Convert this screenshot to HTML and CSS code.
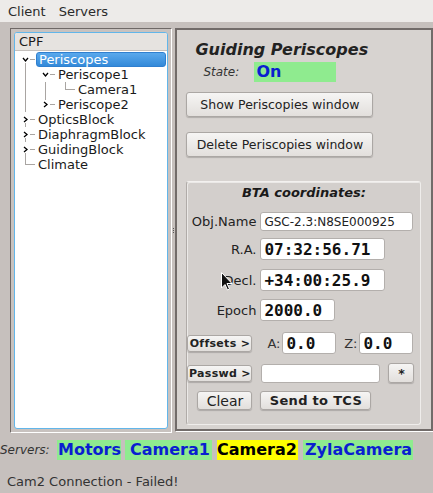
FILE: index.html
```html
<!DOCTYPE html>
<html lang="en">
<head>
    <meta charset="UTF-8">
    <title>CPF Client</title>
    <link rel="stylesheet" href="styles.css">
</head>
<body>

    <div class="menubar">
        <span>Client</span>
        <span>Servers</span>
    </div>

    <div class="main">
        <div class="left-frame">
            <div class="tree">
                <div class="tree-header">CPF</div>
                <div class="row">
                    <span class="cell tee open first"></span>
                    <span class="item selected">Periscopes</span>
                </div>
                <div class="row">
                    <span class="cell pipe"></span>
                    <span class="cell tee open"></span>
                    <span class="item">Periscope1</span>
                </div>
                <div class="row">
                    <span class="cell pipe"></span>
                    <span class="cell pipe"></span>
                    <span class="cell elbow"></span>
                    <span class="item">Camera1</span>
                </div>
                <div class="row">
                    <span class="cell pipe"></span>
                    <span class="cell elbow closed"></span>
                    <span class="item">Periscope2</span>
                </div>
                <div class="row">
                    <span class="cell tee closed"></span>
                    <span class="item">OpticsBlock</span>
                </div>
                <div class="row">
                    <span class="cell tee closed"></span>
                    <span class="item">DiaphragmBlock</span>
                </div>
                <div class="row">
                    <span class="cell tee closed"></span>
                    <span class="item">GuidingBlock</span>
                </div>
                <div class="row">
                    <span class="cell elbow"></span>
                    <span class="item">Climate</span>
                </div>
            </div>
        </div>

        <div class="splitter"><i></i><i></i><i></i></div>

        <div class="right-frame">
            <h2>Guiding Periscopes</h2>
            <div class="state">
                <span class="state-label">State:</span>
                <span class="state-value">On</span>
            </div>
            <button class="btn wide">Show Periscopies window</button>
            <button class="btn wide">Delete Periscopies window</button>

            <div class="group">
                <div class="group-title">BTA coordinates:</div>

                <div class="form-row obj">
                    <label>Obj.Name</label>
                    <input class="field name" value="GSC-2.3:N8SE000925">
                </div>
                <div class="form-row big ra">
                    <label>R.A.</label>
                    <input class="field mono coord" value="07:32:56.71">
                </div>
                <div class="form-row big decl">
                    <label>Decl.</label>
                    <input class="field mono coord" value="+34:00:25.9">
                    <svg class="cursor" width="12" height="19" viewBox="0 0 12 19">
                        <path d="M0.5 0.5 L0.5 16 L4 12.5 L6.5 18 L8.5 17 L6 11.5 L11 11.5 Z" fill="#111" stroke="#fff" stroke-width="1"/>
                    </svg>
                </div>
                <div class="form-row big">
                    <label>Epoch</label>
                    <input class="field mono epoch" value="2000.0">
                </div>
                <div class="form-row offsets">
                    <button class="btn small">Offsets &gt;</button>
                    <span class="axis a">A:</span>
                    <input class="field mono off" value="0.0">
                    <span class="axis z">Z:</span>
                    <input class="field mono off" value="0.0">
                </div>
                <div class="form-row passwd">
                    <button class="btn small">Passwd &gt;</button>
                    <input class="field pass" type="text" value="">
                    <button class="btn star">*</button>
                </div>
                <div class="form-row actions">
                    <button class="btn clear">Clear</button>
                    <button class="btn send">Send to TCS</button>
                </div>
            </div>
        </div>
    </div>

    <div class="servers">
        <span class="servers-label">Servers:</span>
        <span class="srv ok motors">Motors</span>
        <span class="srv ok cam1">Camera1</span>
        <span class="srv warn cam2">Camera2</span>
        <span class="srv ok zyla">ZylaCamera</span>
    </div>

    <div class="status">Cam2 Connection - Failed!</div>

</body>
</html>
```

FILE: styles.css
```css
body {
    margin: 0;
    width: 433px;
    height: 493px;
    overflow: hidden;
    background: #c6c0bd;
    font-family: "DejaVu Sans", sans-serif;
    font-size: 13px;
    color: #1a1a1a;
}
.menubar {
    height: 22px;
    display: flex;
    align-items: center;
    gap: 13px;
    padding-left: 8px;
    background: #edebe9;
    color: #2a2a2a;
}
.main {
    display: flex;
    height: 405px;
    margin-top: 6px;
    padding-left: 10px;
}
.left-frame {
    width: 156px;
    border: 1px solid #6e6866;
    border-right-color: #fff;
    border-bottom-color: #fff;
    padding: 3px;
    background: #c8c2bf;
}
.tree {
    height: 100%;
    box-sizing: border-box;
    background: #fff;
    border: 1px solid #62b6ea;
    border-radius: 3px;
    overflow: hidden;
}
.tree-header {
    height: 17px;
    line-height: 17px;
    padding-left: 4px;
    background: #e6e3e0;
    border-bottom: 1px solid #c4c0bd;
    margin-bottom: 1px;
}
.row {
    display: flex;
    height: 15px;
    line-height: 15px;
    padding-left: 1px;
}
.cell {
    position: relative;
    width: 20px;
    flex: none;
}
.cell.pipe::before,
.cell.tee::before,
.cell.elbow::before {
    content: "";
    position: absolute;
    left: 9px;
    top: 0;
    width: 1px;
    background: #a9a5a2;
}
.cell.pipe::before,
.cell.tee::before {
    height: 15px;
}
.cell.elbow::before {
    height: 8px;
}
.cell.tee::after,
.cell.elbow::after {
    content: "";
    position: absolute;
    left: 9px;
    top: 7px;
    width: 10px;
    height: 1px;
    background: #a9a5a2;
}
.cell.open,
.cell.closed {
    background: no-repeat 6px 4px / 7px 7px;
}
.cell.open {
    background-image: url("data:image/svg+xml,%3Csvg xmlns='http://www.w3.org/2000/svg' viewBox='0 0 7 7'%3E%3Crect width='7' height='7' fill='white'/%3E%3Cpath d='M1 2 L3.5 5 L6 2' fill='none' stroke='black' stroke-width='1.3'/%3E%3C/svg%3E");
}
.cell.closed {
    background-image: url("data:image/svg+xml,%3Csvg xmlns='http://www.w3.org/2000/svg' viewBox='0 0 7 7'%3E%3Crect width='7' height='7' fill='white'/%3E%3Cpath d='M2 1 L5 3.5 L2 6' fill='none' stroke='black' stroke-width='1.3'/%3E%3C/svg%3E");
}
.cell.open::before,
.cell.closed::before {
    top: 11px;
    height: 4px;
}
.cell.open:not(.first)::before {
    display: none;
}
.cell.elbow.closed::before {
    top: 0;
    height: 3px;
}
.cell.open::after,
.cell.closed::after {
    left: 14px;
    width: 5px;
}
.item {
    padding: 0 2px;
    white-space: nowrap;
}
.item.selected {
    flex: 1;
    margin-right: 1px;
    color: #fff;
    background: linear-gradient(#5aa9ec, #3389d9);
    border: 1px solid #2f7fcf;
    border-radius: 3px;
    line-height: 14px;
}
.splitter {
    width: 3px;
    display: flex;
    flex-direction: column;
    justify-content: center;
    gap: 1px;
    align-items: center;
}
.splitter i {
    width: 1px;
    height: 1px;
    background: #555;
}
.right-frame {
    width: 247px;
    border: 2px solid #716b69;
    box-shadow: 1px 1px 0 #fff;
    background: #d7d3d0;
    padding: 0 0 0 9px;
    margin-bottom: 2px;
}
h2 {
    margin: 10px 0 0 9px;
    font-size: 16px;
    font-style: italic;
    font-weight: bold;
    color: #222;
}
.state {
    display: flex;
    align-items: center;
    margin: 3px 0 0 17px;
    height: 20px;
}
.state-label {
    width: 51px;
    font-style: italic;
    font-size: 12px;
    color: #333;
}
.state-value {
    width: 80px;
    height: 20px;
    line-height: 20px;
    padding-left: 2px;
    background: #8feb8f;
    color: #0a1fd0;
    font-weight: bold;
    font-size: 16px;
}
.btn {
    font-family: "DejaVu Sans", sans-serif;
    font-size: 12.5px;
    color: #222;
    background: linear-gradient(#f6f5f4, #e2dfdc);
    border: 1px solid #aba7a4;
    border-radius: 3px;
    box-shadow: 0 1px 1px rgba(0, 0, 0, 0.18);
    padding: 0;
    cursor: pointer;
}
.btn.wide {
    display: block;
    width: 187px;
    height: 25px;
    margin-top: 10px;
}
.btn.wide + .btn.wide {
    margin-top: 15px;
}
.group {
    width: 235px;
    height: 244px;
    margin-top: 24px;
    box-sizing: border-box;
    border: 1px solid #efedeb;
    border-left-color: #b0aba8;
    border-top-color: #f3f1ef;
    border-radius: 3px;
    background: #d3cfcc;
    box-shadow: inset 1px 1px 0 #ebe9e7;
}
.group-title {
    text-align: center;
    font-weight: bold;
    font-style: italic;
    margin-top: 3px;
    height: 17px;
}
.form-row {
    position: relative;
    display: flex;
    align-items: center;
    height: 19px;
    margin-top: 8px;
}
.form-row.obj {
    margin-top: 10px;
}
.form-row label {
    width: 69px;
    text-align: right;
    padding-right: 4px;
    color: #222;
}
.form-row.big {
    height: 22px;
    margin-top: 8px;
}
.form-row.ra {
    margin-top: 7px;
}
.form-row.decl {
    margin-top: 9px;
}
.field {
    box-sizing: border-box;
    height: 19px;
    padding: 0 3px;
    border: 1px solid #b3afac;
    border-radius: 3px;
    background: #fff;
    font-family: "DejaVu Sans", sans-serif;
    font-size: 12px;
    color: #222;
    outline: none;
}
.field.name {
    width: 153px;
}
.mono {
    font-family: "DejaVu Sans Mono", monospace;
    font-weight: bold;
    font-size: 16px;
    color: #111;
    height: 22px;
}
.field.coord {
    width: 125px;
}
.field.epoch {
    width: 75px;
}
.cursor {
    position: absolute;
    left: 34px;
    top: 3px;
}
.btn.small {
    width: 65px;
    height: 17px;
    font-size: 11px;
    font-weight: bold;
    letter-spacing: 0.3px;
}
.form-row.offsets {
    height: 22px;
    margin-top: 11px;
}
.axis {
    text-align: right;
    padding-right: 2px;
    box-sizing: border-box;
    color: #333;
}
.axis.a {
    width: 30px;
}
.axis.z {
    width: 23px;
}
.axis + .field {
    width: 54px;
}
.form-row.passwd {
    margin-top: 9px;
    height: 20px;
}
.field.pass {
    width: 119px;
    margin-left: 9px;
}
.btn.star {
    width: 26px;
    height: 20px;
    margin-left: 8px;
    font-weight: bold;
}
.form-row.actions {
    margin-top: 8px;
    height: 19px;
    padding-left: 10px;
}
.btn.clear {
    width: 55px;
    height: 19px;
    font-size: 14px;
}
.btn.send {
    width: 111px;
    height: 19px;
    margin-left: 8px;
    font-size: 13px;
    font-weight: bold;
    letter-spacing: 0.3px;
}
.servers {
    display: flex;
    align-items: center;
    height: 20px;
    margin-top: 7px;
}
.servers-label {
    font-style: italic;
    font-size: 12px;
    color: #333;
    width: 57px;
}
.srv {
    box-sizing: border-box;
    height: 20px;
    line-height: 20px;
    font-size: 16px;
    font-weight: bold;
    background: #8feb8f;
    color: #0a1fd0;
    white-space: nowrap;
}
.srv.motors {
    width: 64px;
    padding-left: 1px;
}
.srv.cam1 {
    width: 87px;
    margin-left: 4px;
    padding-left: 5px;
}
.srv.cam2 {
    width: 81px;
    margin-left: 5px;
}
.srv.zyla {
    width: 110px;
    margin-left: 5px;
    padding-left: 2px;
}
.srv.warn {
    background: #ffff00;
    color: #000;
}
.status {
    margin: 14px 0 0 7px;
    color: #333;
}
```
